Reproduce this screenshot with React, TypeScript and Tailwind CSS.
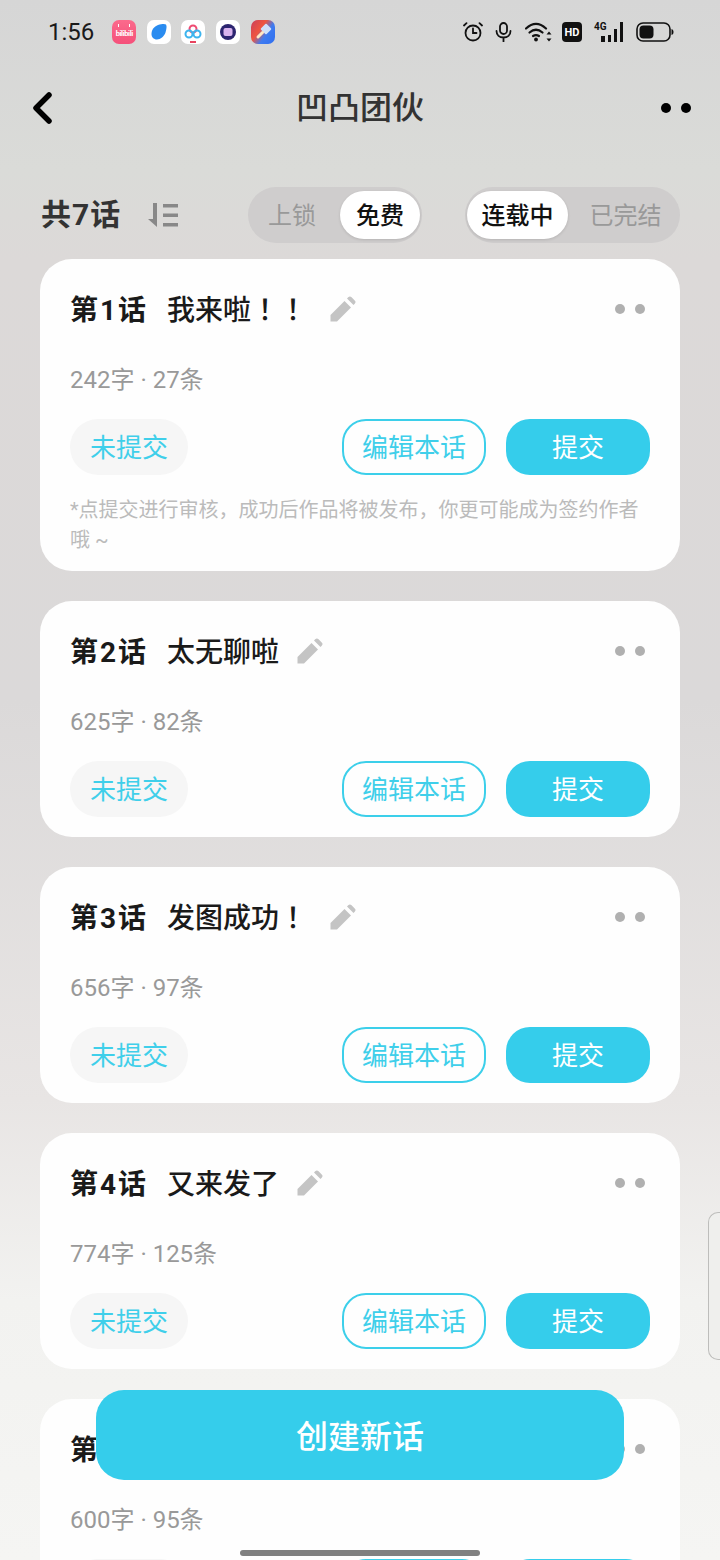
import React from "react"

const chapters = [
  { no: 1, title: "我来啦！！", meta: "242字 · 27条", note: true, gap: "ml-[23px]" },
  { no: 2, title: "太无聊啦", meta: "625字 · 82条", gap: "ml-[18px]" },
  { no: 3, title: "发图成功！", meta: "656字 · 97条", gap: "ml-[23px]" },
  { no: 4, title: "又来发了", meta: "774字 · 125条", gap: "ml-[18px]" },
  { no: 5, title: "继续更新", meta: "600字 · 95条", gap: "ml-[18px]" },
]

function AppIcons() {
  return (
    <div className="ml-[18px] flex items-center gap-[10.6px]">
      <div className="relative flex h-6 w-6 items-center justify-center rounded-[7px] bg-[linear-gradient(180deg,#fb6a8c,#f5507a)] pt-[3px] text-[7.5px] font-bold tracking-[-0.4px] text-white">
        bilibili
        <div className="absolute top-[4px] left-[6px] h-[3px] w-[1px] bg-white" />
        <div className="absolute top-[4px] right-[6px] h-[3px] w-[1px] bg-white" />
      </div>
      <div className="flex h-6 w-6 items-center justify-center rounded-[7px] bg-white">
        <svg viewBox="0 0 24 24" className="h-6 w-6">
          <path d="M11 5c3.500-1 6.500-1.500 8-.5 1 1.500.5 4.500-.5 8-1.500 4-5 7-8.500 7-3.500 0-5.500-2.500-5.500-5.500C4.500 10 7 6.500 11 5z" fill="#2a8cf0" />
        </svg>
      </div>
      <div className="flex h-6 w-6 items-center justify-center rounded-[7px] bg-white">
        <svg viewBox="0 0 24 24" className="h-6 w-6">
          <circle cx="12" cy="9" r="3.500" fill="none" stroke="#ef4a72" strokeWidth="2" />
          <circle cx="8" cy="14" r="3.500" fill="none" stroke="#3db4ee" strokeWidth="2" />
          <circle cx="16" cy="14" r="3.500" fill="none" stroke="#3db4ee" strokeWidth="2" />
          <rect x="9" y="21" width="6" height="2" fill="#e8435f" />
        </svg>
      </div>
      <div className="flex h-6 w-6 items-center justify-center rounded-[7px] bg-white">
        <svg viewBox="0 0 24 24" className="h-6 w-6">
          <circle cx="12" cy="12" r="8" fill="#2c2470" />
          <rect x="7.500" y="8" width="9" height="8" rx="2" fill="#d9b3ee" />
        </svg>
      </div>
      <div className="flex h-6 w-6 items-center justify-center rounded-[7px] bg-[linear-gradient(125deg,#c9405c_0%,#f0553f_38%,#3f7bf0_62%,#2f6ff0_100%)]">
        <svg viewBox="0 0 24 24" className="h-6 w-6">
          <rect x="11" y="5" width="8" height="8" rx="1" transform="rotate(45 15 9)" fill="#cfe0fb" />
          <path d="M11.500 12.500 7 17" stroke="#ffe7c4" strokeWidth="3" strokeLinecap="round" />
        </svg>
      </div>
    </div>
  )
}

function StatusIcons() {
  return (
    <div className="flex items-center text-[#111]">
      <svg viewBox="0 0 20 20" className="h-5 w-5" fill="none" stroke="currentColor" strokeWidth="1.800">
        <circle cx="10" cy="11" r="7.500" />
        <path d="M10 6.500V11h3.500M1 3.500 3.500 1.200M19 3.500 16.500 1.200" strokeLinecap="round" />
      </svg>
      <svg viewBox="0 0 17 20" className="ml-3 h-5 w-[17px]" fill="none" stroke="currentColor" strokeWidth="1.800">
        <rect x="5" y="1" width="7" height="11" rx="3.500" />
        <path d="M1.500 9c0 4 3 6.500 7 6.500s7-2.500 7-6.500M8.500 15.500V19.500" strokeLinecap="round" />
      </svg>
      <svg viewBox="0 0 27 20" className="ml-[13px] h-5 w-[27px]" fill="none" stroke="currentColor">
        <path d="M1 6.500c6.500-6 13.500-6 20 0" strokeWidth="2.200" strokeLinecap="round" />
        <path d="M4.500 10.500c4.500-3.800 8.500-3.800 13 0" strokeWidth="2.200" strokeLinecap="round" />
        <path d="M8 14c2-1.300 4-1.300 6 0" strokeWidth="2.200" strokeLinecap="round" />
        <circle cx="11" cy="17.500" r="1.900" fill="currentColor" stroke="none" />
        <path d="M24 9.500l2.500 3h-5zM24 19.500l2.500-3h-5z" fill="currentColor" stroke="none" />
      </svg>
      <div className="ml-[10px] flex h-5 w-5 items-center justify-center rounded-[4px] bg-[#111] text-[11px] leading-none font-bold text-white">
        HD
      </div>
      <div className="relative ml-3 h-5 w-[29px]">
        <span className="absolute top-[-1px] left-0 text-[10px] leading-[11px] font-bold">4G</span>
        <div className="absolute right-0 bottom-0 flex items-end gap-[3px]">
          <div className="h-[6px] w-[4px] bg-[#111]" />
          <div className="h-[7px] w-[3px] bg-[#111]" />
          <div className="h-[13px] w-[3px] bg-[#111]" />
          <div className="h-5 w-[3px] bg-[#111]" />
        </div>
      </div>
      <svg viewBox="0 0 38 20" className="ml-[13px] h-5 w-[38px]">
        <rect x="1" y="1" width="33" height="18" rx="6" fill="none" stroke="currentColor" strokeWidth="1.600" />
        <rect x="3.500" y="3.500" width="14" height="13" rx="4" fill="currentColor" />
        <path d="M35.500 7c1.500.5 2 1.500 2 3s-.5 2.500-2 3z" fill="currentColor" />
      </svg>
    </div>
  )
}

function PencilIcon() {
  return (
    <svg viewBox="0 0 26 26" className="h-[26px] w-[26px] shrink-0" fill="#c4c4c4">
      <path d="M0.500 25.500V19L14.500 5l6.500 6.500L7 25.500z" strokeLinejoin="round" />
      <path d="M17 2.500l1.200-1.200a2.400 2.400 0 0 1 3.400 0l3.100 3.100a2.400 2.400 0 0 1 0 3.400L23.500 9z" />
    </svg>
  )
}

function ChapterCard({ no, title, meta, note, gap }: { no: number; title: string; meta: string; note?: boolean; gap: string }) {
  return (
    <div className={`shrink-0 rounded-[32px] bg-[#fefefe] px-[30px] ${note ? "h-[312px]" : "h-[236px]"}`}>
      <div className="flex h-[102px] items-center pt-[2px]">
        <span className="w-[75px] text-[28px] leading-none font-bold tracking-[2px] whitespace-nowrap text-[#1a1a1a]">第{no}话</span>
        <span className="ml-[22px] text-[28px] leading-none font-medium whitespace-nowrap text-[#1a1a1a] [font-family:Roboto,'Noto_Sans_CJK_JP',sans-serif]">{title}</span>
        <div className={`${gap} mt-[-4px]`}>
          <PencilIcon />
        </div>
        <div className="mt-[-4px] mr-[5px] ml-auto flex gap-[10px]">
          <div className="h-[10px] w-[10px] rounded-full bg-[#b0b0b0]" />
          <div className="h-[10px] w-[10px] rounded-full bg-[#b0b0b0]" />
        </div>
      </div>
      <div className="h-[58px] pt-[3px] text-2xl leading-[32px] text-[#999]">{meta}</div>
      <div className="flex items-center">
        <div className="flex h-14 w-[118px] items-center justify-center rounded-full bg-[#f6f6f6] pt-[3px] text-[26px] text-[#3fcfea]">
          未提交
        </div>
        <div className="ml-auto flex h-14 w-36 items-center justify-center rounded-[24px] border-2 border-[#3ccfea] pt-[3px] text-[26px] text-[#3fcfea]">
          编辑本话
        </div>
        <div className="ml-5 flex h-14 w-36 items-center justify-center rounded-[24px] bg-[#35cdeb] pt-[3px] text-[26px] text-white">
          提交
        </div>
      </div>
      {note && (
        <p className="mt-5 text-[20px] leading-[30px] text-[#bbb]">
          *点提交进行审核，成功后作品将被发布，你更可能成为签约作者哦 ~
        </p>
      )}
    </div>
  )
}

export default function App() {
  return (
    <div className="relative h-[1560px] w-[720px] overflow-hidden bg-[linear-gradient(180deg,#d6d6d6_0px,#dadbd8_170px,#dcd9d8_260px,#dbd9d9_700px,#e8e5e4_1100px,#f2f2f0_1300px,#f5f5f3_1560px)] [font-family:Roboto,'Noto_Sans_CJK_SC',sans-serif]">
      {/* status bar */}
      <div className="flex h-16 items-center pr-[46px] pl-12">
        <span className="text-2xl leading-none text-[#1a1a1a]">1:56</span>
        <AppIcons />
        <div className="ml-auto">
          <StatusIcons />
        </div>
      </div>

      {/* header */}
      <div className="relative flex h-[88px] items-center justify-center">
        <svg viewBox="0 0 20 32" className="absolute top-7 left-8 h-8 w-5" fill="none" stroke="#000" strokeWidth="5.5" strokeLinecap="round" strokeLinejoin="round">
          <path d="M17 3 4 16l13 13" />
        </svg>
        <h1 className="text-[32px] leading-none font-medium text-[#333]">凹凸团伙</h1>
        <div className="absolute top-[39px] right-[29px] flex gap-[10px]">
          <div className="h-[10px] w-[10px] rounded-full bg-black" />
          <div className="h-[10px] w-[10px] rounded-full bg-black" />
        </div>
      </div>

      {/* filters */}
      <div className="mt-[35px] flex h-14 items-center pr-10 pl-[41px]">
        <span className="w-[79px] text-[30px] leading-none font-bold tracking-[1px] whitespace-nowrap text-[#333]">共7话</span>
        <svg viewBox="0 0 30 26" className="ml-7 h-[26px] w-[30px]" fill="#888">
          <path d="M5 1h4v24L0 17h5z" />
          <rect x="15" y="2" width="15" height="3.500" />
          <rect x="15" y="11.500" width="15" height="3.500" />
          <rect x="15" y="21" width="15" height="3.500" />
        </svg>
        <div className="ml-[70px] flex h-14 w-[174px] items-center rounded-full bg-[#cfcdcd] pr-[2px]">
          <div className="flex-1 pt-[2px] pr-1 text-center text-2xl text-[#999]">上锁</div>
          <div className="flex h-12 w-20 items-center justify-center rounded-full bg-white pt-[2px] text-2xl font-medium text-[#111] shadow-[0_1px_3px_rgba(0,0,0,0.12)]">
            免费
          </div>
        </div>
        <div className="ml-auto flex h-14 w-[215px] items-center rounded-full bg-[#cfcdcd] pl-[2px]">
          <div className="flex h-12 w-[101px] items-center justify-center rounded-full bg-white pt-[2px] text-2xl font-medium text-[#111] shadow-[0_1px_3px_rgba(0,0,0,0.12)]">
            连载中
          </div>
          <div className="flex-1 pt-[2px] pl-[3px] text-center text-2xl text-[#999]">已完结</div>
        </div>
      </div>

      {/* chapter list */}
      <div className="mt-4 flex flex-col gap-[30px] px-10">
        {chapters.map((c) => (
          <ChapterCard key={c.no} {...c} />
        ))}
      </div>

      {/* floating */}
      <button className="absolute top-[1390px] left-24 flex h-[90px] w-[528px] items-center justify-center rounded-[28px] bg-[#35cdeb] pt-[3px] text-[32px] font-medium text-white">
        创建新话
      </button>
      <div className="absolute top-[1212px] right-0 h-[148px] w-3 rounded-l-[10px] border border-r-0 border-[#bdbdbb] bg-[#efefed]" />
      <div className="absolute top-[1550px] left-60 h-[6px] w-60 rounded-full bg-[#808080]" />
    </div>
  )
}
